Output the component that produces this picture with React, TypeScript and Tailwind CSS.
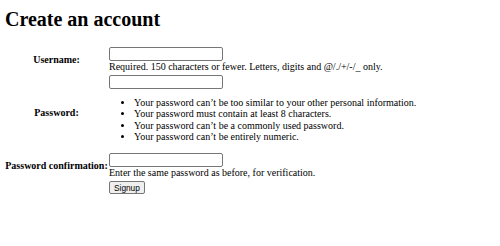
export default function App() {
  const rules = [
    "Your password can\u2019t be too similar to your other personal information.",
    "Your password must contain at least 8 characters.",
    "Your password can\u2019t be a commonly used password.",
    "Your password can\u2019t be entirely numeric.",
  ];
  const input =
    "block w-[114px] h-[14px] border border-[#767676] rounded-[2px] bg-white";
  return (
    <div className="w-[500px] h-[246px] bg-white text-black pl-[5px] pt-[8px] font-['Liberation_Serif','Times_New_Roman',serif] text-[10px] leading-[11.5px]">
      <h1 className="text-[20px] leading-[23px] font-bold m-0">Create an account</h1>
      <div className="mt-[15px] grid grid-cols-[103px_auto] gap-x-[1px] justify-start">
        <div className="flex items-center justify-center font-bold py-[1px]">Username:</div>
        <div className="py-[1px]">
          <input type="text" className={input} />
          <div>Required. 150 characters or fewer. Letters, digits and @/./+/-/_ only.</div>
        </div>

        <div className="flex items-center justify-center font-bold py-[1px]">Password:</div>
        <div className="py-[1px]">
          <input type="password" className={input} />
          <ul className="list-disc pl-[25px] mt-[8px] mb-[8px]">
            {rules.map((r) => (
              <li key={r}>{r}</li>
            ))}
          </ul>
        </div>

        <div className="flex items-center justify-center font-bold py-[1px] whitespace-nowrap">
          Password confirmation:
        </div>
        <div className="py-[1px]">
          <input type="password" className={input} />
          <div>Enter the same password as before, for verification.</div>
        </div>

        <div />
        <div className="py-[1px]">
          <button
            type="button"
            className="block mt-[1px] h-[13px] px-[4px] border border-[#767676] rounded-[2px] bg-[#efefef] font-['Liberation_Sans',Arial,sans-serif] text-[8.3px] leading-[10px] text-black"
          >
            Signup
          </button>
        </div>
      </div>
    </div>
  );
}
